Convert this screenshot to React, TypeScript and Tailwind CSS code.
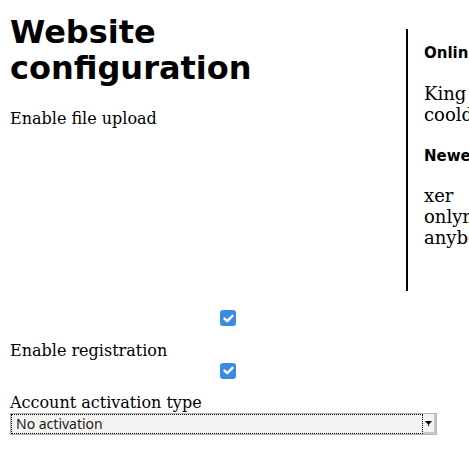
import { useState } from "react";

function CheckBox({ checked, onToggle }: { checked: boolean; onToggle: () => void }) {
  return (
    <div className="flex w-[436px] justify-center">
      <button
        onClick={onToggle}
        className={`flex h-[16px] w-[16px] items-center justify-center rounded-[3px] ${checked ? "bg-[#3d8ae6]" : "border border-[#8a8a8a] bg-white"}`}
      >
        {checked && (
          <svg width="11" height="9" viewBox="0 0 11 9">
            <path d="M1.5 4.6 L4.2 7.2 L9.5 1.8" fill="none" stroke="#fff" strokeWidth="2.4" strokeLinecap="round" strokeLinejoin="round" />
          </svg>
        )}
      </button>
    </div>
  );
}

export default function App() {
  const [upload, setUpload] = useState(true);
  const [registration, setRegistration] = useState(true);

  return (
    <div className="w-[469px] overflow-hidden font-['DejaVu_Serif',serif] text-[16px] text-black">
      <div className="flex">
        <div className="w-[406px] shrink-0 pl-[10px]">
          <h1 className="w-[300px] pt-[14px] font-['DejaVu_Sans',sans-serif] text-[32px] font-bold leading-[36px]">
            Website configuration
          </h1>
          <p className="mt-[24px] leading-[18.6px]">Enable file upload</p>
        </div>

        {/* sidebar */}
        <aside className="mt-[29px] h-[262px] w-[220px] shrink-0 border-l-2 border-black pl-[16px] whitespace-nowrap">
          <h4 className="mt-[15px] font-['DejaVu_Sans',sans-serif] text-[15px] font-bold leading-[18px]">
            Online users
          </h4>
          <p className="mt-[21px] text-[18px] leading-[21px]">
            King
            <br />
            cooldude
          </p>
          <h4 className="mt-[22px] font-['DejaVu_Sans',sans-serif] text-[15px] font-bold leading-[18px]">
            Newest users
          </h4>
          <p className="mt-[20px] text-[18px] leading-[21px]">
            xer
            <br />
            onlyme
            <br />
            anybody
          </p>
        </aside>
      </div>

      <div className="pl-[10px]">
        <div className="mt-[19px]">
          <CheckBox checked={upload} onToggle={() => setUpload(!upload)} />
        </div>
        <p className="mt-[16px] leading-[18.6px]">Enable registration</p>
        <div className="mt-[2px]">
          <CheckBox checked={registration} onToggle={() => setRegistration(!registration)} />
        </div>
        <p className="mt-[15px] leading-[18.6px]">Account activation type</p>

        {/* select */}
        <div className="mt-[1px] flex h-[22px] w-[427px] border border-[#b4b4b4] bg-[#f4f3f1]">
          <div className="flex flex-1 items-center border border-dotted border-black pl-[4px] font-['Noto_Sans',sans-serif] text-[14px] leading-none text-[#1a1a1a]">
            No activation
          </div>
          <div className="flex w-[13px] items-center justify-center border-r-2 border-b-2 border-[#c8c8c8] bg-[#f4f3f1]">
            <svg width="7" height="5" viewBox="0 0 7 5">
              <path d="M0 0 H7 L3.5 4 Z" fill="#000" />
              <rect x="3" y="4" width="1" height="1" fill="#000" />
            </svg>
          </div>
        </div>
      </div>
    </div>
  );
}
